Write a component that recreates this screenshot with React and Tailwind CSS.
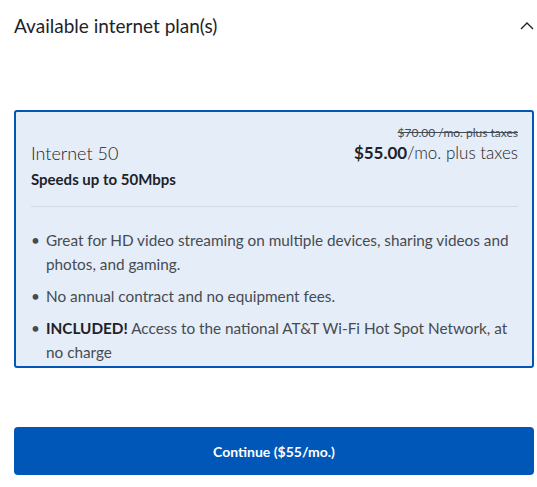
export default function App() {
  return (
    <div className="w-[537px] h-[487px] bg-white text-[#1d2329] font-['Lato',sans-serif]">
      <div className="flex items-center justify-between pl-[14px] pr-[3px] pt-[13px] h-[26px] box-content">
        <h2 className="text-[19px] leading-[26px] text-[#1d2329]">Available internet plan(s)</h2>
        <svg width="14" height="8" viewBox="0 0 14 8" fill="none">
          <path d="M1 7L7 1L13 7" stroke="#1d2329" strokeWidth="1.4" />
        </svg>
      </div>

      <div className="ml-[14px] mt-[71px] w-[520px] h-[258px] rounded-[3px] border-2 border-[#0057b8] bg-[#e5edf8] pl-[15px] pr-[14px]">
        <div className="flex justify-between pt-[13px]">
          <div className="pt-[16px]">
            <div className="text-[18px] leading-[24px] font-light">Internet 50</div>
            <div className="text-[15px] leading-[22px] font-bold mt-[3px]">Speeds up to 50Mbps</div>
          </div>
          <div className="flex flex-col items-end">
            <div className="text-[12px] leading-[16px] line-through text-[#454b52]">$70.00 /mo. plus taxes</div>
            <div className="text-[17px] leading-[24px]">
              <span className="font-bold">$55.00</span>
              <span className="font-light">/mo. plus taxes</span>
            </div>
          </div>
        </div>
        <div className="h-px bg-[#d4dbe4] mt-[16px]" />
        <ul className="mt-[21px] flex flex-col gap-[8px] text-[15.3px] leading-[24px] text-[#454b52]">
          <li className="flex">
            <span className="w-[15px] shrink-0">•</span>
            <span>Great for HD video streaming on multiple devices, sharing videos and photos, and gaming.</span>
          </li>
          <li className="flex">
            <span className="w-[15px] shrink-0">•</span>
            <span>No annual contract and no equipment fees.</span>
          </li>
          <li className="flex">
            <span className="w-[15px] shrink-0">•</span>
            <span>
              <span className="font-bold text-[#1d2329]">INCLUDED!</span> Access to the national AT&amp;T Wi-Fi Hot Spot Network, at no charge
            </span>
          </li>
        </ul>
      </div>

      <button className="ml-[14px] mt-[59px] w-[520px] h-[48px] rounded-[4px] bg-[#0057b8] text-white text-[14px] font-bold">
        Continue ($55/mo.)
      </button>
    </div>
  );
}
